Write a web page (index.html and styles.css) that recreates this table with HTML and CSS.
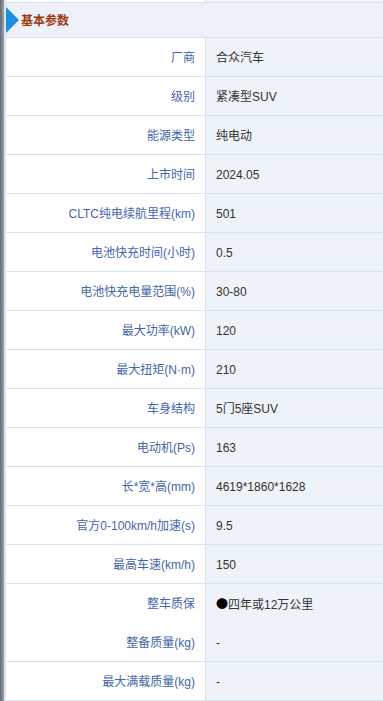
FILE: index.html
```html
<!DOCTYPE html>
<html lang="zh">
<head>
<meta charset="utf-8">
<link rel="stylesheet" href="styles.css">
</head>
<body>
<div class="frame">
  <div class="strip"></div>
  <div class="edge"></div>
  <div class="table">
    <div class="prev"><div class="prev-l"></div><div class="prev-r"></div></div>
    <div class="head"><span class="tri"></span><span class="title">基本参数</span></div>
    <div class="row"><div class="k">厂商</div><div class="v">合众汽车</div></div>
    <div class="row"><div class="k">级别</div><div class="v">紧凑型SUV</div></div>
    <div class="row"><div class="k">能源类型</div><div class="v">纯电动</div></div>
    <div class="row"><div class="k">上市时间</div><div class="v">2024.05</div></div>
    <div class="row"><div class="k">CLTC纯电续航里程(km)</div><div class="v">501</div></div>
    <div class="row"><div class="k">电池快充时间(小时)</div><div class="v">0.5</div></div>
    <div class="row"><div class="k">电池快充电量范围(%)</div><div class="v">30-80</div></div>
    <div class="row"><div class="k">最大功率(kW)</div><div class="v">120</div></div>
    <div class="row"><div class="k">最大扭矩(N·m)</div><div class="v">210</div></div>
    <div class="row"><div class="k">车身结构</div><div class="v">5门5座SUV</div></div>
    <div class="row"><div class="k">电动机(Ps)</div><div class="v">163</div></div>
    <div class="row"><div class="k">长*宽*高(mm)</div><div class="v">4619*1860*1628</div></div>
    <div class="row"><div class="k">官方0-100km/h加速(s)</div><div class="v">9.5</div></div>
    <div class="row"><div class="k">最高车速(km/h)</div><div class="v">150</div></div>
    <div class="row"><div class="k">整车质保</div><div class="v"><span class="dot">●</span>四年或12万公里</div></div>
    <div class="row"><div class="k">整备质量(kg)</div><div class="v">-</div></div>
    <div class="row"><div class="k">最大满载质量(kg)</div><div class="v">-</div></div>
  </div>
</div>
</body>
</html>
```
FILE: styles.css
```css
html, body {
  margin: 0;
  padding: 0;
  background: #ffffff;
  overflow: hidden;
}
body {
  font-family: "Liberation Sans", "Noto Sans CJK SC", sans-serif;
  font-size: 12px;
}
.frame {
  display: flex;
  height: 701px;
}
.strip {
  width: 4px;
  flex: none;
  background: linear-gradient(90deg, #5f6a74 0, #7d878e 50%, #9aa1a6 100%);
}
.edge {
  width: 2px;
  flex: none;
  background: #dde5ee;
}
.table {
  flex: 1;
  display: flex;
  flex-direction: column;
}
.prev {
  display: grid;
  grid-template-columns: 200px 1fr;
  height: 2px;
  border-bottom: 1px solid #d8e3f1;
}
.prev-l {
  background: #ffffff;
  border-right: 1px solid #d8e3f1;
}
.prev-r {
  background: #eef2f9;
}
.head {
  height: 35px;
  background: #eef2f8;
  border-bottom: 1px solid #d8e3f1;
  display: flex;
  align-items: center;
}
.tri {
  width: 0;
  height: 0;
  border-left: 13px solid #1a8fe3;
  border-top: 13px solid transparent;
  border-bottom: 13px solid transparent;
  margin-right: 2px;
}
.title {
  font-weight: bold;
  color: #9e3a0c;
  font-size: 12px;
}
.row {
  display: grid;
  grid-template-columns: 200px 1fr;
  height: 38px;
  border-bottom: 1px solid #d8e3f1;
  flex: none;
}
.k {
  background: #ffffff;
  border-right: 1px solid #d8e3f1;
  color: #4565aa;
  text-align: right;
  padding-right: 10px;
  padding-top: 2px;
  line-height: 36px;
  white-space: nowrap;
}
.v {
  background: #eef2f9;
  color: #333333;
  padding-left: 10px;
  padding-top: 2px;
  line-height: 36px;
  white-space: nowrap;
}
.dot {
  font-family: "Noto Sans CJK SC", sans-serif;
  color: #000000;
}
```
